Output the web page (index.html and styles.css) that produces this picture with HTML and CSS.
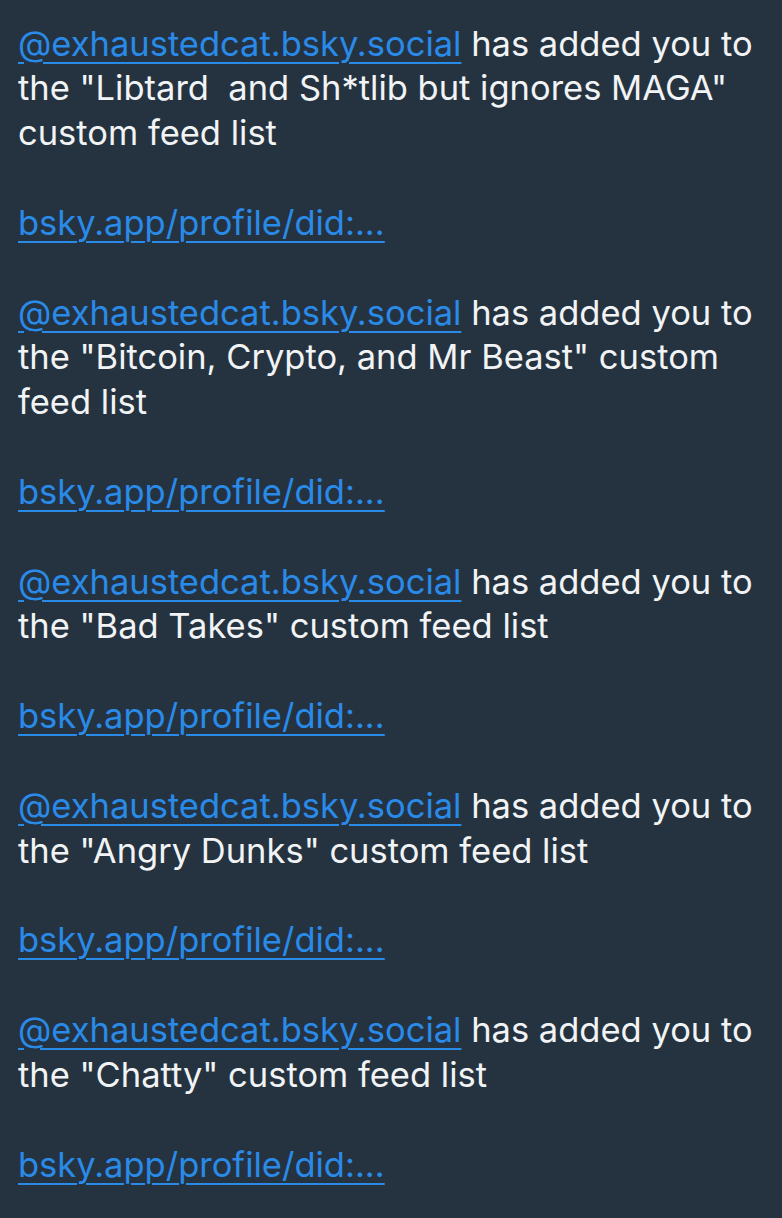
FILE: index.html
```html
<!DOCTYPE html>
<html>
<head>
<meta charset="utf-8">
<link rel="stylesheet" href="styles.css">
</head>
<body>
<div class="post">
<p class="para"><a class="link" href="#">@exhaustedcat.bsky.social</a> has added you to the "Libtard&nbsp; and Sh*tlib but ignores MAGA" custom feed list</p>
<p class="para"><a class="link" href="#">bsky.app/profile/did:...</a></p>
<p class="para"><a class="link" href="#">@exhaustedcat.bsky.social</a> has added you to the "Bitcoin, Crypto, and Mr Beast" custom feed list</p>
<p class="para"><a class="link" href="#">bsky.app/profile/did:...</a></p>
<p class="para"><a class="link" href="#">@exhaustedcat.bsky.social</a> has added you to the "Bad Takes" custom feed list</p>
<p class="para"><a class="link" href="#">bsky.app/profile/did:...</a></p>
<p class="para"><a class="link" href="#">@exhaustedcat.bsky.social</a> has added you to the "Angry Dunks" custom feed list</p>
<p class="para"><a class="link" href="#">bsky.app/profile/did:...</a></p>
<p class="para"><a class="link" href="#">@exhaustedcat.bsky.social</a> has added you to the "Chatty" custom feed list</p>
<p class="para"><a class="link" href="#">bsky.app/profile/did:...</a></p>
</div>
</body>
</html>
```
FILE: styles.css
```css
html, body {
  margin: 0;
  padding: 0;
  background: #253341;
}
body {
  width: 782px;
  height: 1218px;
  overflow: hidden;
}
.post {
  padding: 21.5px 18px 0 18px;
  font-family: Inter, "Noto Sans", sans-serif;
  font-size: 34.5px;
  line-height: 44.85px;
  color: #f1f3f5;
  display: flex;
  flex-direction: column;
  gap: 44.85px;
}
.para {
  margin: 0;
}
.link {
  color: #2a8ae8;
  text-decoration: underline;
  text-decoration-thickness: 2px;
  text-underline-offset: 6px;
}
```
